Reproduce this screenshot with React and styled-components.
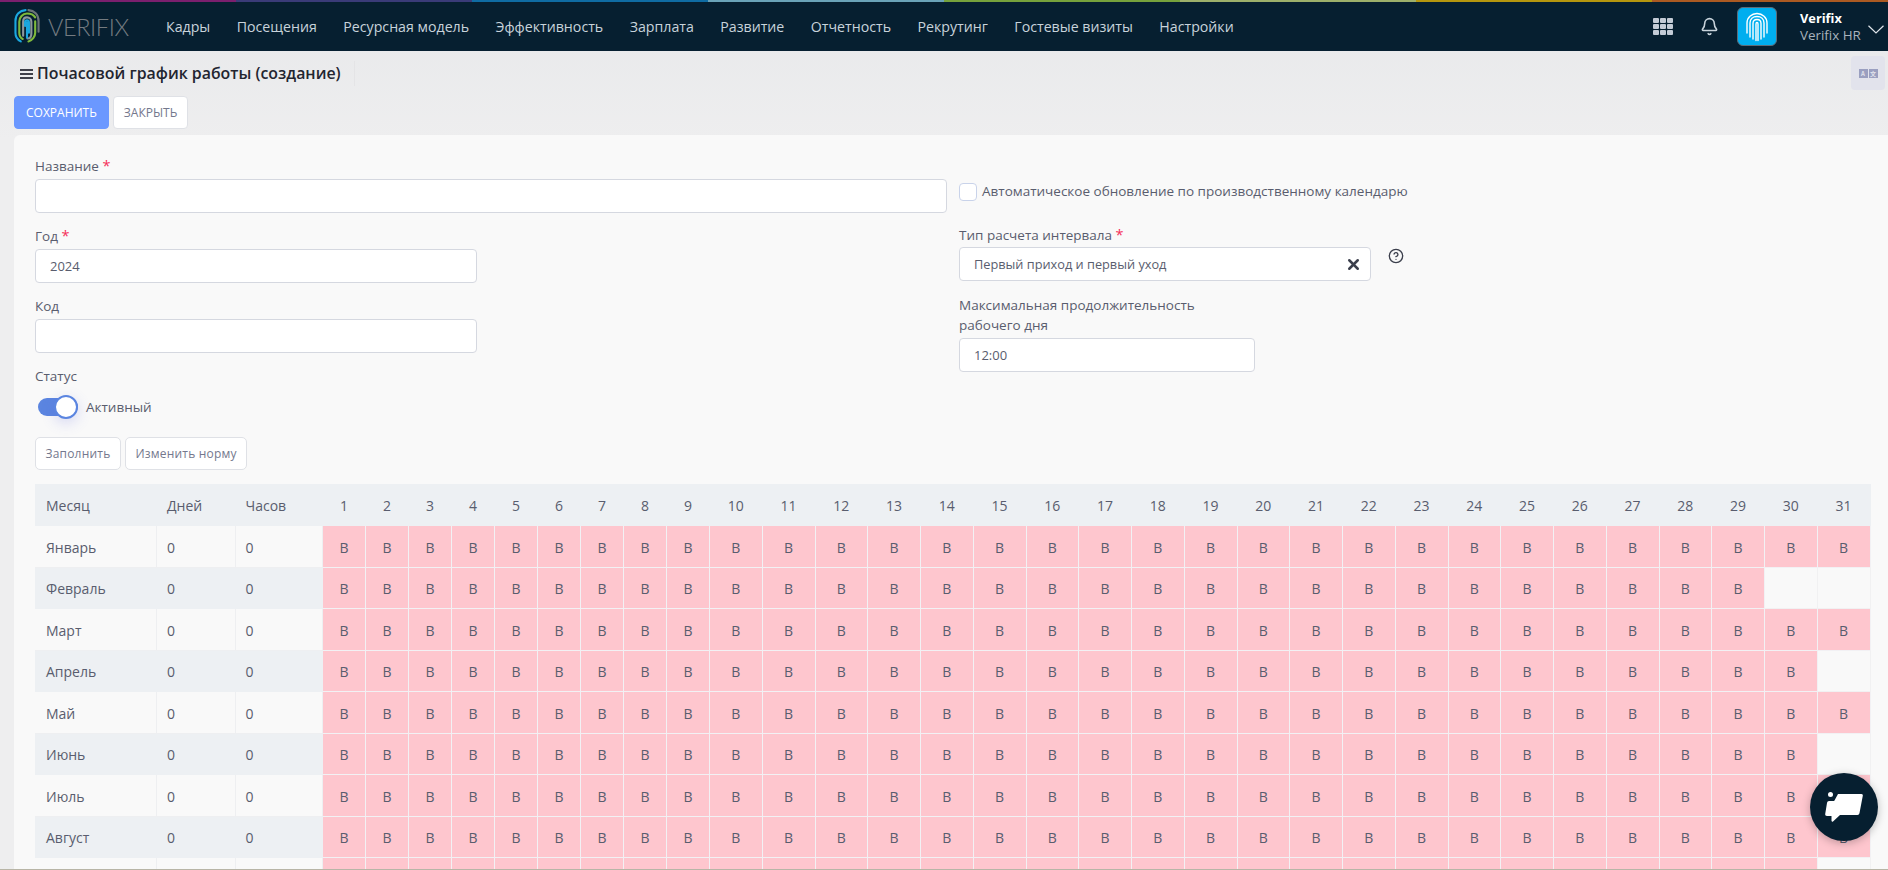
import React from 'react'
import styled, { createGlobalStyle } from 'styled-components'
import { X, Bell, CircleHelp } from 'lucide-react'

const GlobalStyle = createGlobalStyle`
  html, body {
    margin: 0;
    padding: 0;
    height: 100%;
    overflow: hidden;
  }
  body {
    font-family: 'Open Sans', 'Noto Sans', sans-serif;
    font-size: 13.5px;
    color: #595d6e;
  }
  * { box-sizing: border-box; }
`

const Page = styled.div`
  height: 870px;
  overflow: hidden;
  position: relative;
  display: flex;
  flex-direction: column;
  background: linear-gradient(180deg, #e7e8ea 0, #eeeeef 140px);
  border-bottom: 1px solid #b8b5a6;
`
const Stripe = styled.div`
  display: flex;
  height: 2px;
  flex: none;
  background: #061f30;
`
const StripePart = styled.div`
  flex: 1;
  background: ${p => p.$color};
`
const Header = styled.header`
  flex: none;
  height: 49px;
  display: flex;
  align-items: center;
  background: #061f30;
  padding-left: 14px;
`
const Brand = styled.div`
  display: flex;
  align-items: center;
  gap: 8px;
  width: 152px;
`
const BrandName = styled.span`
  font-family: 'Lato', sans-serif;
  font-weight: 300;
  font-size: 23.5px;
  letter-spacing: -0.4px;
  color: #747b80;
`
const Nav = styled.nav`
  display: flex;
  gap: 26.4px;
  flex: 1;
`
const NavItem = styled.a`
  font-size: 14.2px;
  color: #c8d3db;
  white-space: nowrap;
`
const HeaderTools = styled.div`
  display: flex;
  align-items: center;
  padding-right: 4px;
`
const GridIcon = styled.div`
  display: grid;
  grid-template-columns: repeat(3, 6px);
  grid-auto-rows: 5px;
  gap: 1px;
  margin-right: 27px;
`
const GridDot = styled.span`
  background: #c3cbd6;
  border-radius: 1px;
`
const BellWrap = styled.div`
  display: flex;
  color: #c8d3db;
  margin-right: 18px;
`
const Avatar = styled.div`
  width: 40px;
  height: 39px;
  border-radius: 6px;
  border: 1px solid #5d6c78;
  background: #00aeef;
  display: flex;
  align-items: center;
  justify-content: center;
  margin-right: 23px;
`
const UserBlock = styled.div`
  display: flex;
  flex-direction: column;
  width: 61px;
  line-height: 17px;
  margin-right: 7px;
  white-space: nowrap;
`
const UserName = styled.span`
  font-size: 12.8px;
  font-weight: 700;
  color: #fff;
`
const UserOrg = styled.span`
  font-size: 13.4px;
  color: #a9b3bc;
`
const ChevronWrap = styled.div`
  display: flex;
  margin-top: 6px;
`
const TitleBar = styled.div`
  flex: none;
  height: 45px;
  display: flex;
  align-items: center;
  padding-left: 20px;
  position: relative;
`
const Burger = styled.div`
  display: flex;
  flex-direction: column;
  gap: 2px;
  width: 13px;
  margin-right: 4px;
`
const BurgerLine = styled.span`
  height: 2px;
  background: #3d3f48;
`
const Title = styled.h1`
  margin: 0;
  font-size: 15.9px;
  font-weight: 600;
  color: #232530;
  padding-right: 13px;
  line-height: 25px;
  border-right: 1px solid #e4e4e6;
`
const TranslateButton = styled.button`
  position: absolute;
  top: 5px;
  right: 3px;
  width: 34px;
  height: 34px;
  padding: 0;
  border: none;
  border-radius: 4px;
  background: #e2e3ec;
  display: flex;
  align-items: center;
  justify-content: center;
  gap: 1px;
`
const TranslateGlyph = styled.span`
  width: 9px;
  height: 9px;
  background: #9a9fc0;
  color: #e2e3ec;
  font-family: 'Noto Sans CJK SC', 'Open Sans', sans-serif;
  font-size: 6px;
  line-height: 9px;
  text-align: center;
  font-weight: 700;
`
const ActionBar = styled.div`
  flex: none;
  display: flex;
  gap: 4px;
  padding-left: 14px;
  margin-bottom: 6px;
`
const ActionButton = styled.button`
  height: 33px;
  padding: 0 ${p => (p.$primary ? '11px' : '10px')};
  font-family: inherit;
  font-size: 12px;
  text-transform: uppercase;
  border-radius: 4px;
  border: 1px solid ${p => (p.$primary ? '#6b98ff' : '#dfe1e6')};
  background: ${p => (p.$primary ? '#6b98ff' : '#fff')};
  color: ${p => (p.$primary ? '#fff' : '#74788d')};
`
const Panel = styled.main`
  flex: 1;
  min-height: 0;
  margin-left: 14px;
  padding: 21px 17.5px 0 21px;
  background: #f9f9f9;
  border-top-left-radius: 6px;
  overflow: hidden;
`
const FormRow = styled.div`
  display: flex;
  gap: 12px;
`
const LeftColumn = styled.div`
  width: 912px;
`
const RightColumn = styled.div`
  flex: 1;
`
const Label = styled.label`
  display: block;
  line-height: 20px;
  margin-bottom: ${p => p.$after || 3}px;
  max-width: ${p => p.$max || 'none'};
`
const Required = styled.span`
  color: #f5305a;
  font-size: 14.5px;
`
const Input = styled.input`
  display: block;
  height: 34px;
  width: ${p => p.$width}px;
  margin-bottom: ${p => p.$after || 13}px;
  padding: 0 14px;
  font-family: inherit;
  font-size: 13px;
  color: #595d6e;
  background: #fff;
  border: 1px solid #d5d8e0;
  border-radius: 4px;
  outline: none;
`
const CheckRow = styled.div`
  display: flex;
  align-items: center;
  gap: 5px;
  margin: 27px 0 24px;
  height: 18px;
`
const CheckBox = styled.span`
  width: 18px;
  height: 18px;
  border: 1px solid #c9d3ea;
  border-radius: 4px;
  background: #fff;
`
const CheckText = styled.span`
  margin-top: -2px;
`
const SelectRow = styled.div`
  display: flex;
  align-items: flex-start;
  gap: 17px;
  margin-bottom: 14px;
`
const SelectBox = styled.div`
  width: 412px;
  height: 34px;
  padding: 0 14px;
  display: flex;
  align-items: center;
  justify-content: space-between;
  font-size: 12.75px;
  background: #fff;
  border: 1px solid #d5d8e0;
  border-radius: 4px;
`
const ClearIcon = styled.span`
  display: flex;
  color: #3b3f4c;
  margin-right: -6px;
`
const HelpIcon = styled.span`
  display: flex;
  color: #3b3f4c;
  margin-top: 1px;
`
const Toggle = styled.div`
  display: flex;
  align-items: center;
  gap: 8px;
  margin: 0 0 18px 3px;
  height: 24px;
`
const ToggleTrack = styled.span`
  position: relative;
  display: block;
  width: 40px;
  height: 18px;
  background: #5b85e0;
  border-radius: 9px;
`
const ToggleKnob = styled.span`
  position: absolute;
  top: -3px;
  right: 0;
  width: 24px;
  height: 24px;
  border-radius: 50%;
  background: #fff;
  border: 2px solid #5b85e0;
  box-shadow: 0 4px 14px rgba(91, 100, 224, 0.22);
`
const SmallButtons = styled.div`
  display: flex;
  gap: 4px;
  margin-bottom: 14px;
`
const SmallButton = styled.button`
  height: 33px;
  padding: 0 9.5px;
  font-family: inherit;
  font-size: 12px;
  letter-spacing: 0.2px;
  color: #74788d;
  background: #fff;
  border: 1px solid #dfe1e6;
  border-radius: 5px;
`
const Table = styled.div`
  display: grid;
  grid-template-columns: 122px 78.5px 87.5px repeat(9, 43px) repeat(22, 1fr);
  grid-template-rows: 42px;
  grid-auto-rows: 41.5px;
`
const Cell = styled.div`
  display: flex;
  align-items: center;
  justify-content: ${p => (p.$center ? 'center' : 'flex-start')};
  padding-left: ${p => (p.$center ? 0 : p.$pad || 10)}px;
  padding-top: 1.5px;
  font-size: 14px;
  background: ${p => p.$bg};
  border-right: 1px solid ${p => p.$line};
  border-bottom: 1px solid ${p => p.$line};
`
const ChatButton = styled.button`
  position: absolute;
  left: 1810px;
  top: 773px;
  width: 68px;
  height: 68px;
  padding: 0;
  border: none;
  border-radius: 50%;
  background: #061f30;
  box-shadow: 0 2px 8px rgba(0, 0, 0, 0.25);
  display: flex;
  align-items: center;
  justify-content: center;
`

const stripeColors = ['#7b1f6e', '#3a3b78', '#0f6ca3', '#6aa3b8', '#76a23c', '#9db06b', '#b4960e', '#ab5a22']
const navItems = ['Кадры', 'Посещения', 'Ресурсная модель', 'Эффективность', 'Зарплата', 'Развитие', 'Отчетность', 'Рекрутинг', 'Гостевые визиты', 'Настройки']
const months = [
  ['Январь', 31], ['Февраль', 29], ['Март', 31], ['Апрель', 30], ['Май', 31], ['Июнь', 30],
  ['Июль', 31], ['Август', 31], ['Сентябрь', 30], ['Октябрь', 31], ['Ноябрь', 30], ['Декабрь', 31]
]
const days = Array.from({ length: 31 }, (_, i) => i + 1)

const LogoMark = () => (
  <svg width="26" height="37" viewBox="0 0 27 37" fill="none" strokeWidth="2.2" strokeLinecap="round">
    <path d="M7 34C3 32 1.500 28 1.500 25V13C1.500 6 6 2 12 1.500" stroke="#1aa7df" />
    <path d="M15 1.500C21 2 25.500 6 25.500 13V24" stroke="#6c7479" />
    <path d="M22 9C20.500 6.500 17 5 13.500 5C9 5 5.500 9 5.500 13.500V25C5.500 28 7 30.500 9 31.500" stroke="#7fba3c" />
    <path d="M22 13V25C22 29 19 33 15 34" stroke="#7fba3c" />
    <path d="M9.500 28V13.500C9.500 11 11 9 13.500 9C16 9 18 11 18 13.500V26C18 29 16.500 31 14 31" stroke="#8d979c" />
    <path d="M13.500 30V14" stroke="#1aa7df" />
    <path d="M11.500 18V14C11.500 13 12.500 12 13.500 12C14.500 12 15.500 13 15.500 14V25" stroke="#1aa7df" />
  </svg>
)

const AvatarPrint = () => (
  <svg width="24" height="30" viewBox="0 0 24 30" fill="none" stroke="#fff" strokeWidth="1.4" strokeLinecap="round">
    <path d="M2 21V11C2 5.500 6.500 1.500 12 1.500C17.500 1.500 22 5.500 22 11V21" />
    <path d="M5 25V11C5 7 8 4.500 12 4.500C16 4.500 19 7 19 11V25" />
    <path d="M8 27V11.500C8 9 9.800 7.500 12 7.500C14.200 7.500 16 9 16 11.500V27" />
    <path d="M11 28.500V12C11 11 11.400 10.500 12 10.500C12.600 10.500 13 11 13 12V28.500" />
  </svg>
)

const Chevron = () => (
  <svg width="16" height="9" viewBox="0 0 16 9" fill="none" stroke="#dfe5ea" strokeWidth="1.2">
    <path d="M0.500 0.800L8 8L15.500 0.800" />
  </svg>
)

const ChatIcon = () => (
  <svg width="38" height="32" viewBox="0 0 38 32">
    <circle cx="5.500" cy="3.500" r="2.500" fill="#fff" />
    <path d="M13 3H36.500C37.500 3 38 3.800 37.800 4.800L34.500 22C34.300 23 33.500 24 32.500 24H15L8 30.500C7 31 6.500 30.500 6.500 29.500V25H2C0.800 25 0 24 0.200 23L2 12C2.200 10.800 3 10 4 10H8C9 10 9.700 9.500 10 8.500Z" fill="#fff" />
  </svg>
)

const rowLook = i => (i % 2 === 0 ? { bg: '#f9f9f9', line: '#eeeff1' } : { bg: '#edf0f3', line: '#edf0f3' })

export default function App () {
  return (
    <Page>
      <GlobalStyle />
      <Stripe>
        {stripeColors.map(c => <StripePart key={c} $color={c} />)}
      </Stripe>
      <Header>
        <Brand>
          <LogoMark />
          <BrandName>VERIFIX</BrandName>
        </Brand>
        <Nav>
          {navItems.map(n => <NavItem key={n}>{n}</NavItem>)}
        </Nav>
        <HeaderTools>
          <GridIcon>
            {Array.from({ length: 9 }, (_, i) => <GridDot key={i} />)}
          </GridIcon>
          <BellWrap><Bell size={19} strokeWidth={2} /></BellWrap>
          <Avatar><AvatarPrint /></Avatar>
          <UserBlock>
            <UserName>Verifix</UserName>
            <UserOrg>Verifix HR</UserOrg>
          </UserBlock>
          <ChevronWrap><Chevron /></ChevronWrap>
        </HeaderTools>
      </Header>

      <TitleBar>
        <Burger><BurgerLine /><BurgerLine /><BurgerLine /></Burger>
        <Title>Почасовой график работы (создание)</Title>
        <TranslateButton>
          <TranslateGlyph>A</TranslateGlyph>
          <TranslateGlyph>文</TranslateGlyph>
        </TranslateButton>
      </TitleBar>
      <ActionBar>
        <ActionButton $primary>Сохранить</ActionButton>
        <ActionButton>Закрыть</ActionButton>
      </ActionBar>

      <Panel>
        <FormRow>
          <LeftColumn>
            <Label>Название <Required>*</Required></Label>
            <Input $width={912} />
            <Label>Год <Required>*</Required></Label>
            <Input $width={442} defaultValue="2024" />
            <Label>Код</Label>
            <Input $width={442} />
            <Label $after={9}>Статус</Label>
            <Toggle>
              <ToggleTrack><ToggleKnob /></ToggleTrack>
              <span>Активный</span>
            </Toggle>
          </LeftColumn>
          <RightColumn>
            <CheckRow>
              <CheckBox />
              <CheckText>Автоматическое обновление по производственному календарю</CheckText>
            </CheckRow>
            <Label $after={2}>Тип расчета интервала <Required>*</Required></Label>
            <SelectRow>
              <SelectBox>
                Первый приход и первый уход
                <ClearIcon><X size={17} strokeWidth={3.5} /></ClearIcon>
              </SelectBox>
              <HelpIcon><CircleHelp size={16} strokeWidth={2} /></HelpIcon>
            </SelectRow>
            <Label $max="260px">Максимальная продолжительность рабочего дня</Label>
            <Input $width={296} defaultValue="12:00" />
          </RightColumn>
        </FormRow>
        <SmallButtons>
          <SmallButton>Заполнить</SmallButton>
          <SmallButton>Изменить норму</SmallButton>
        </SmallButtons>
        <Table>
          <Cell $bg="#edf0f3" $line="#edf0f3" $pad={11}>Месяц</Cell>
          <Cell $bg="#edf0f3" $line="#edf0f3">Дней</Cell>
          <Cell $bg="#edf0f3" $line="#edf0f3">Часов</Cell>
          {days.map(d => <Cell key={d} $center $bg="#edf0f3" $line="#edf0f3">{d}</Cell>)}
          {months.map(([name, count], i) => {
            const { bg, line } = rowLook(i)
            return (
              <React.Fragment key={name}>
                <Cell $bg={bg} $line={line} $pad={11}>{name}</Cell>
                <Cell $bg={bg} $line={line}>0</Cell>
                <Cell $bg={bg} $line={line}>0</Cell>
                {days.map(d => (d <= count
                  ? <Cell key={d} $center $bg="#fec6ce" $line="#f2f1f4">В</Cell>
                  : <Cell key={d} $center $bg="#f9f9f9" $line="#f1f1f2" />))}
              </React.Fragment>
            )
          })}
        </Table>
      </Panel>

      <ChatButton><ChatIcon /></ChatButton>
    </Page>
  )
}
